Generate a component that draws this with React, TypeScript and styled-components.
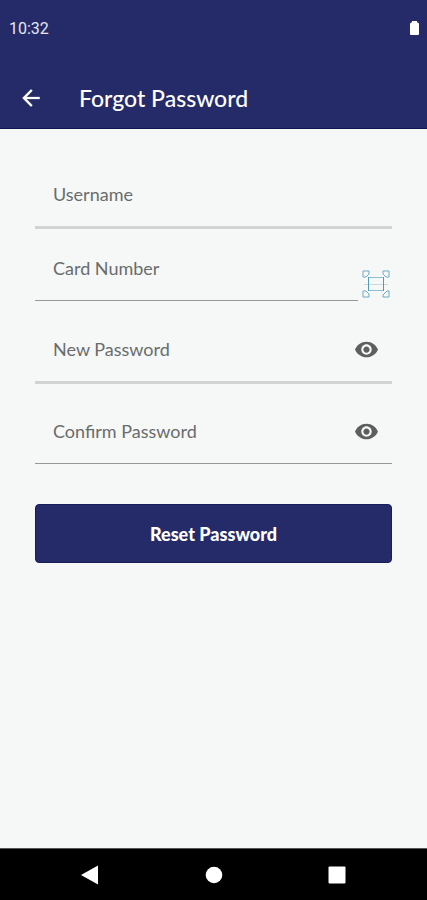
import React, { useState } from "react";
import styled, { createGlobalStyle } from "styled-components";

const GlobalStyle = createGlobalStyle`
  *, *::before, *::after { box-sizing: border-box; }
  body { margin: 0; background: #f5f8f7; font-family: Lato, "Open Sans", sans-serif; }
  button, input { font: inherit; }
`;

const Screen = styled.div`
  display: flex;
  flex-direction: column;
  min-height: 100vh;
  background: #f5f8f7;
`;

const Header = styled.header`
  background: #252b68;
  border-bottom: 1px solid #10154f;
  color: #fff;
`;

const StatusBar = styled.div`
  display: flex;
  align-items: center;
  justify-content: space-between;
  height: 56px;
  padding: 0 7px 0 9px;
  font-family: Roboto, sans-serif;
  font-size: 16px;
  color: #e4e6f3;
`;

const TitleBar = styled.div`
  display: flex;
  align-items: center;
  gap: 32px;
  height: 72px;
  padding: 12px 15px 0;
`;

const IconButton = styled.button`
  display: grid;
  place-items: center;
  flex: none;
  padding: 3px;
  border: 0;
  background: none;
  color: inherit;
  cursor: pointer;
`;

const Title = styled.h1`
  margin: 0;
  font-size: 23px;
  line-height: 32px;
  font-weight: 500;
`;

const Form = styled.form`
  display: flex;
  flex: 1;
  flex-direction: column;
  padding: 33px 35px;
`;

const FieldGroup = styled.div<{ $gap: number }>`
  display: flex;
  flex-direction: column;
  gap: ${(p) => p.$gap}px;
  margin-bottom: 16px;
`;

const Row = styled.div`
  display: flex;
  align-items: flex-end;
  gap: 4px;
`;

const Field = styled.div<{ $thick?: boolean }>`
  display: flex;
  flex-grow: 1;
  align-items: center;
  min-width: 0;
  padding-right: 10px;
  border-bottom: ${(p) => (p.$thick ? "3px solid #d2d4d3" : "1px solid #969998")};
  color: #5d5f5f;
`;

const Input = styled.input`
  flex: 1;
  min-width: 0;
  height: 64px;
  padding: 0 0 0 18px;
  border: 0;
  outline: 0;
  background: none;
  color: #444;
  font-size: 18px;
  &::placeholder { color: #6a6c6c; opacity: 1; }
`;

const ScanButton = styled(IconButton)`
  padding: 0 2px 3px 0;
  color: #6fa9bf;
`;

const Submit = styled.button`
  height: 59px;
  margin-top: 24px;
  border: 1px solid #171c5a;
  border-radius: 4px;
  background: #252b68;
  color: #fff;
  font-size: 18px;
  font-weight: 900;
  cursor: pointer;
`;

const NavBar = styled.nav`
  display: flex;
  align-items: center;
  justify-content: space-between;
  height: 52px;
  padding: 0 77px;
  border-top: 1px solid #555;
  background: #000;
  color: #fff;
`;

const Eye = () => (
  <svg width="25" height="25" viewBox="0 0 24 24" fill="currentColor" aria-hidden="true">
    <path d="M12 4.5C7 4.5 2.73 7.61 1 12c1.73 4.39 6 7.5 11 7.5s9.27-3.11 11-7.5c-1.73-4.39-6-7.5-11-7.5zM12 17c-2.76 0-5-2.24-5-5s2.24-5 5-5 5 2.24 5 5-2.24 5-5 5zm0-8c-1.66 0-3 1.34-3 3s1.34 3 3 3 3-1.34 3-3-1.34-3-3-3z" />
  </svg>
);

const ScanCard = () => (
  <svg width="28" height="28" viewBox="0 0 28 28" fill="none" stroke="currentColor" aria-hidden="true">
    <path d="M1 7V1h6v3L4 7zM21 1h6v6h-3l-3-3zM1 21h3l3 3v3H1zM27 21v6h-6v-2l4-4z" />
    <path d="M2 14.500h24" stroke="#c3dce5" />
    <path d="M6 7.500h16M6 20.500h16" stroke="#8fbfd0" />
    <path d="M6.500 7v14M21.500 7v14" stroke="#4f9ab5" />
  </svg>
);

const BackArrow = () => (
  <svg width="26" height="26" viewBox="0 0 24 24" fill="currentColor" stroke="currentColor" strokeWidth=".2" aria-hidden="true">
    <path d="M20 11H7.830l5.590-5.590L12 4l-8 8 8 8 1.410-1.410L7.830 13H20v-2z" />
  </svg>
);

const Battery = () => (
  <svg width="11" height="16" viewBox="0 0 11 16" fill="#fff" aria-hidden="true">
    <path d="M3 1h5v1l2 1.500V14q0 1-1 1H2q-1 0-1-1V3.500L3 2z" />
  </svg>
);

function PasswordField({ label, thick }: { label: string; thick?: boolean }) {
  const [shown, setShown] = useState(false);
  return (
    <Field $thick={thick}>
      <Input type={shown ? "text" : "password"} placeholder={label} aria-label={label} />
      <IconButton type="button" aria-label={`Show ${label}`} onClick={() => setShown(!shown)}>
        <Eye />
      </IconButton>
    </Field>
  );
}

export default function App() {
  return (
    <Screen>
      <GlobalStyle />
      <Header>
        <StatusBar>
          <time>10:32</time>
          <Battery />
        </StatusBar>
        <TitleBar>
          <IconButton type="button" aria-label="Back">
            <BackArrow />
          </IconButton>
          <Title>Forgot Password</Title>
        </TitleBar>
      </Header>
      <Form onSubmit={(e) => e.preventDefault()}>
        <FieldGroup $gap={7}>
          <Field $thick>
            <Input type="text" placeholder="Username" aria-label="Username" />
          </Field>
          <Row>
            <Field>
              <Input type="text" inputMode="numeric" placeholder="Card Number" aria-label="Card Number" />
            </Field>
            <ScanButton type="button" aria-label="Scan card">
              <ScanCard />
            </ScanButton>
          </Row>
        </FieldGroup>
        <FieldGroup $gap={15}>
          <PasswordField label="New Password" thick />
          <PasswordField label="Confirm Password" />
        </FieldGroup>
        <Submit type="submit">Reset Password</Submit>
      </Form>
      <NavBar aria-label="System">
        <IconButton type="button" aria-label="System back">
          <svg width="20" height="20" viewBox="0 0 20 20" fill="currentColor" aria-hidden="true">
            <path d="M1 10 18 .5v19z" />
          </svg>
        </IconButton>
        <IconButton type="button" aria-label="Home">
          <svg width="18" height="18" viewBox="0 0 18 18" fill="currentColor" aria-hidden="true">
            <circle cx="9" cy="9" r="8.300" />
          </svg>
        </IconButton>
        <IconButton type="button" aria-label="Recent apps">
          <svg width="20" height="20" viewBox="0 0 20 20" fill="currentColor" aria-hidden="true">
            <rect x="1.500" y="1.500" width="17" height="17" rx="1" />
          </svg>
        </IconButton>
      </NavBar>
    </Screen>
  );
}
